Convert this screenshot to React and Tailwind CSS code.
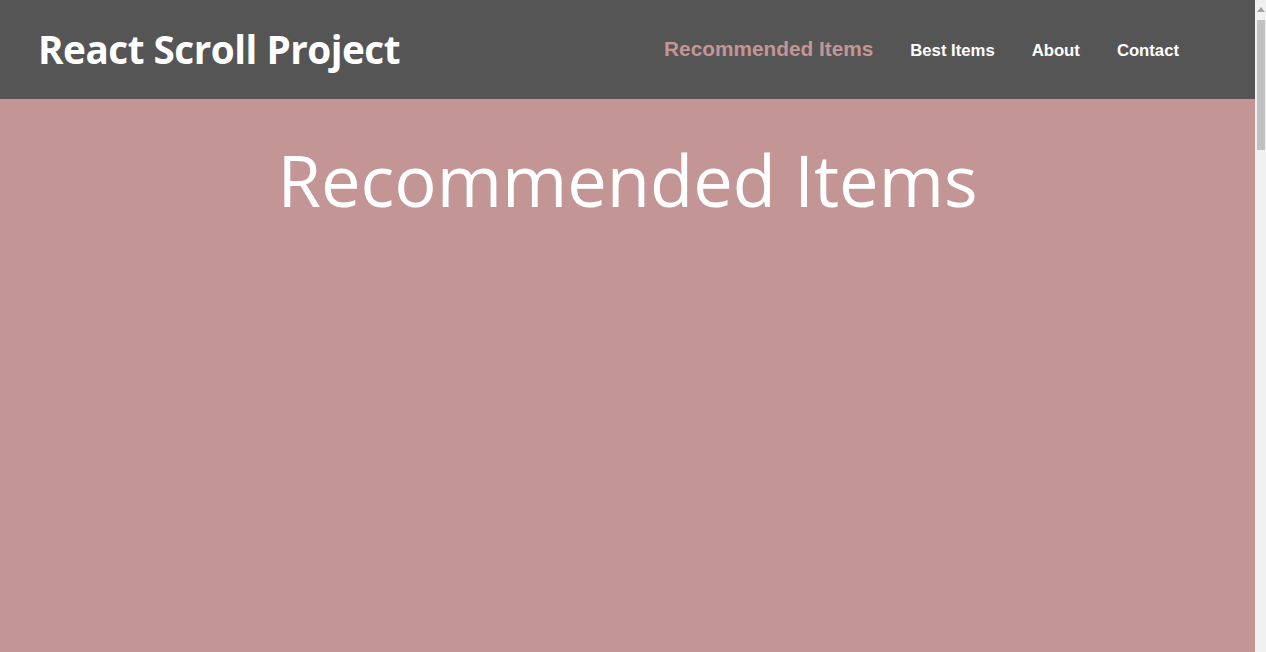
const navItems = [
  { label: 'Recommended Items', active: true },
  { label: 'Best Items' },
  { label: 'About' },
  { label: 'Contact' },
]

const App = () => {
  return (
    <div className="flex h-screen w-full overflow-hidden bg-[#f1f1f1]">
      <div className="flex flex-1 flex-col bg-[#c49595]">
        {/* Header */}
        <header className="flex h-[99px] shrink-0 items-center justify-between bg-[#555555] pl-[38px] pr-[76px]">
          <h1 className="font-['Open_Sans',sans-serif] text-[38.7px] font-bold leading-none tracking-[-0.5px] text-white">
            React Scroll Project
          </h1>
          <nav className="flex items-baseline gap-[37px] pb-[2px] font-['Liberation_Sans',Arial,sans-serif] font-bold">
            {navItems.map((item) => (
              <a
                key={item.label}
                href="#"
                className={
                  item.active
                    ? 'text-[20.8px] text-[#c49595]'
                    : 'text-[16.7px] text-white'
                }
              >
                {item.label}
              </a>
            ))}
          </nav>
        </header>

        {/* Section */}
        <section className="flex-1 pt-[46px] text-center">
          <h2 className="font-['Open_Sans',sans-serif] text-[70.5px] font-normal leading-none text-white">
            Recommended Items
          </h2>
        </section>
      </div>

      {/* Scrollbar */}
      <div className="flex w-[11px] shrink-0 flex-col items-center bg-[#f1f1f1]">
        <div className="mt-[7px] h-0 w-0 border-x-[4px] border-b-[5px] border-x-transparent border-b-[#a3a3a3]" />
        <div className="mt-[8px] h-[130px] w-[8px] bg-[#c1c1c1]" />
      </div>
    </div>
  )
}

export default App
